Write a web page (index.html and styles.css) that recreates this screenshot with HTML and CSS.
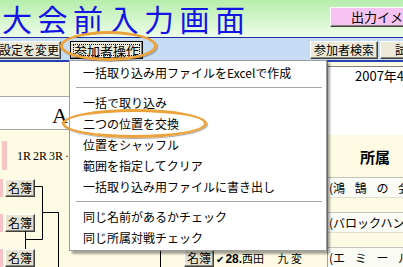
FILE: index.html
```html
<!DOCTYPE html>
<html lang="ja">
<head>
<meta charset="UTF-8">
<title>大会前入力画面</title>
<link rel="stylesheet" href="styles.css">
</head>
<body>

<div class="screen">
    <header class="titlebar">
        <h1 class="title">大会前入力画面</h1>
        <button class="btn btn-out">出力イメージ</button>
    </header>

    <div class="toolbar">
        <button class="btn tool-cut">設定を変更</button>
        <button class="btn tool-focus"><span>参加者操作</span></button>
        <div class="spacer"></div>
        <button class="btn tool-search">参加者検索</button>
        <button class="btn tool-next">試合表示</button>
    </div>

    <div class="content">
        <div class="main">
            <div class="top-space"></div>
            <div class="band">A</div>
            <div class="rounds">
                <div class="pink-strip"></div>
                <div class="round-label">1R 2R 3R ·</div>
            </div>
            <div class="bracket">
                <svg class="lines" width="327" height="92">
                    <path d="M35 10.5H42.5V63.5H25.5M25.5 55V73M42.5 36.5H58.5V92M160.5 0V92" fill="none" stroke="#000" stroke-width="1"/>
                </svg>
                <div class="row">
                    <span class="mark"></span>
                    <button class="btn btn-list">名簿</button>
                    <button class="btn btn-list right-list">名簿</button>
                    <span class="entry"><span class="chk">✔</span><b>26.</b><span class="name">山本　 一 郎</span></span>
                </div>
                <div class="row">
                    <span class="mark"></span>
                    <button class="btn btn-list">名簿</button>
                    <button class="btn btn-list right-list">名簿</button>
                    <span class="entry"><span class="chk">✔</span><b>27.</b><span class="name">佐藤　 健 二</span></span>
                </div>
                <div class="row">
                    <span class="mark"></span>
                    <button class="btn btn-list">名簿</button>
                    <button class="btn btn-list right-list">名簿</button>
                    <span class="entry"><span class="chk">✔</span><b>28.</b><span class="name">西田　 九 変</span></span>
                </div>
            </div>
        </div>

        <div class="side">
            <div class="date-box">2007年4月15日</div>
            <div class="side-head">所属</div>
            <div class="side-row"><div class="cell spaced">(鴻 鵠 の 会)</div></div>
            <div class="side-row"><div class="cell">(バロックハンド)</div></div>
            <div class="side-row"><div class="cell spaced">(エ ミ ー ル)</div></div>
        </div>
    </div>

    <ul class="menu">
        <li>一括取り込み用ファイルをExcelで作成</li>
        <li class="sep"></li>
        <li>一括で取り込み</li>
        <li>二つの位置を交換</li>
        <li>位置をシャッフル</li>
        <li>範囲を指定してクリア</li>
        <li>一括取り込み用ファイルに書き出し</li>
        <li class="sep"></li>
        <li>同じ名前があるかチェック</li>
        <li>同じ所属対戦チェック</li>
    </ul>

    <div class="ring ring-button"></div>
    <div class="ring ring-item"></div>
</div>

</body>
</html>
```

FILE: styles.css
```css
* {
    box-sizing: border-box;
}
body {
    margin: 0;
    font-family: "Noto Sans CJK JP", sans-serif;
    font-size: 12px;
    color: #000;
}
.screen {
    position: relative;
    width: 403px;
    height: 267px;
    overflow: hidden;
    background-color: #fdfbe3;
}

/* title */
.titlebar {
    height: 38px;
    display: flex;
    justify-content: space-between;
    align-items: flex-start;
    background: linear-gradient(#b6eeab, #eefdea);
    border-bottom: 1px solid #1a2f9a;
}
.title {
    margin: 0 0 0 2px;
    font-size: 30px;
    line-height: 36px;
    letter-spacing: 5.5px;
    font-weight: 400;
    color: #1414e6;
    white-space: nowrap;
}
.btn {
    font-family: "Noto Sans CJK JP", sans-serif;
    font-size: 13px;
    line-height: 14px;
    padding: 0;
    color: #000;
    background-color: #ece9d8;
    border: 1px solid;
    border-color: #fff #404040 #404040 #fff;
    box-shadow: inset -1px -1px #8a877a;
    white-space: nowrap;
    overflow: hidden;
}
.btn-out {
    flex-shrink: 0;
    margin-top: 7px;
    margin-right: -20px;
    width: 93px;
    height: 20px;
    text-align: left;
    padding-left: 20px;
    background-color: #f5c2f1;
}

/* toolbar */
.toolbar {
    height: 24px;
    display: flex;
    align-items: flex-start;
    padding-top: 3px;
    background-color: #c6dcf4;
    border-bottom: 2px solid #2a40b0;
}
.toolbar .btn {
    height: 18px;
    flex-shrink: 0;
}
.tool-cut {
    width: 64px;
    margin-left: -3px;
    font-size: 12px;
}
.tool-focus {
    width: 73px;
    margin-left: 9px;
    border-color: #000;
    padding: 2px;
}
.tool-focus span {
    display: block;
    height: 12px;
    line-height: 11px;
    border: 1px dotted #000;
}
.spacer {
    flex: 1;
}
.tool-search {
    width: 68px;
    font-size: 12px;
}
.tool-next {
    width: 60px;
    margin-left: 2px;
    margin-right: -37px;
    text-align: left;
    padding-left: 14px;
    font-size: 12px;
}

/* content */
.content {
    display: flex;
    height: 205px;
}
.main {
    width: 327px;
    flex-shrink: 0;
}
.top-space {
    height: 35px;
    border-bottom: 1px solid #a8a8a8;
}
.band {
    height: 33px;
    background-color: #fff;
    border-bottom: 1px solid #a8a8a8;
    padding: 3px 0 0 52px;
    font-family: "Liberation Serif", serif;
    font-size: 22px;
    line-height: 32px;
}
.rounds {
    height: 46px;
    display: flex;
}
.pink-strip {
    width: 5px;
    height: 29px;
    margin: 11px 0 0 2px;
    background-color: #f6c6c6;
}
.round-label {
    margin: 19px 0 0 10px;
    font-family: "Liberation Serif", serif;
    font-size: 12px;
    line-height: 14px;
    word-spacing: -1px;
}
.bracket {
    position: relative;
}
.lines {
    position: absolute;
    left: 0;
    top: 0;
}
.row {
    height: 35px;
    display: flex;
    align-items: flex-start;
    padding-top: 3px;
}
.mark {
    width: 3px;
    height: 18px;
    margin-right: 2px;
    background-color: #f6c2c8;
}
.btn-list {
    width: 30px;
    height: 18px;
    padding-bottom: 2px;
    font-size: 12px;
    line-height: 13px;
    background-color: #e6e3d3;
}
.right-list {
    width: 30px;
    margin-left: 149px;
    position: relative;
}
.entry {
    height: 18px;
    line-height: 18px;
    font-size: 12px;
    white-space: nowrap;
}
.entry b {
    font-family: "Liberation Sans", sans-serif;
    font-size: 12px;
}
.name {
    font-size: 11px;
}
.chk {
    font-family: "DejaVu Sans", sans-serif;
    font-size: 10px;
    font-weight: bold;
    margin: 0 1px 0 2px;
}

/* side panel */
.side {
    flex: 1;
    border-left: 1px solid #a0a0a0;
    padding-top: 4px;
    white-space: nowrap;
    overflow: hidden;
}
.date-box {
    height: 69px;
    background-color: #fff;
    border-top: 1px solid #808080;
    padding-left: 27px;
    font-size: 13px;
    line-height: 17px;
}
.side-head {
    height: 42px;
    padding: 13px 0 0 32px;
    font-size: 15px;
    font-weight: bold;
    line-height: 18px;
}
.side-row {
    height: 35px;
    border-top: 1px solid #c4c4bc;
}
.cell {
    height: 20px;
    padding-left: 1px;
    background-color: #fbfbf6;
    border-bottom: 1px solid #e2e0d0;
    line-height: 20px;
}
.cell.spaced {
    word-spacing: 7px;
}

/* popup menu */
.menu {
    position: absolute;
    left: 69px;
    top: 60px;
    width: 258px;
    margin: 0;
    padding: 1px 0 2px;
    list-style: none;
    background-color: #fff;
    border: 1px solid #9d9d9d;
    box-shadow: 3px 3px 2px rgba(0, 0, 0, 0.35);
}
.menu li {
    height: 21px;
    line-height: 21px;
    padding-left: 13px;
    font-size: 12px;
    white-space: nowrap;
}
.menu li.sep {
    height: 9px;
    margin: 0 4px 0 6px;
    padding: 0;
    background: linear-gradient(transparent 4px, #a6a6a6 4px, #a6a6a6 5px, transparent 5px);
}

/* highlight rings */
.ring {
    position: absolute;
    border: 3px solid #eda33c;
    border-radius: 50%;
    box-shadow: 1px 1px 1px rgba(60, 60, 60, 0.45);
}
.ring-button {
    left: 60px;
    top: 31px;
    width: 97px;
    height: 30px;
}
.ring-item {
    left: 62px;
    top: 109px;
    width: 145px;
    height: 29px;
}
```
